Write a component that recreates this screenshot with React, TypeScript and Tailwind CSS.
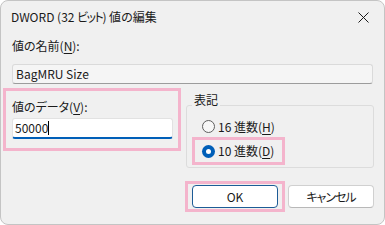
import React from "react";

const font = "font-['Noto_Sans_CJK_JP','Noto_Sans',sans-serif] [font-feature-settings:'palt']";

function U({ children }: { children: React.ReactNode }) {
  return <span className="underline underline-offset-[2px] decoration-[1px]">{children}</span>;
}

function Radio({ checked }: { checked?: boolean }) {
  return checked ? (
    <span className="w-[13px] h-[13px] rounded-full bg-[#005fb8] flex items-center justify-center shrink-0">
      <span className="w-[5px] h-[5px] rounded-full bg-white" />
    </span>
  ) : (
    <span className="w-[13px] h-[13px] rounded-full border border-[#5f5f5f] bg-[#f7f7f7] shrink-0" />
  );
}

export default function App() {
  return (
    <div className={`w-[385px] h-[225px] bg-white ${font} text-[12px] text-[#1a1a1a]`}>
      <div className="w-full h-full rounded-[8px] border border-[#c4c4c4] bg-[#f0f0f0] flex flex-col overflow-hidden">
        {/* title bar */}
        <div className="h-[31px] flex items-center justify-between pl-[10px] pr-[15px]">
          <span className="leading-[16px] pt-[1px]">
            DWORD (32 <span className="tracking-[-1.5px]">ビット</span>) 値の編集
          </span>
          <svg width="11" height="11" viewBox="0 0 11 11" className="mt-[1px]">
            <path d="M0.5 0.5 L10.5 10.5 M10.5 0.5 L0.5 10.5" stroke="#1a1a1a" strokeWidth="1" />
          </svg>
        </div>
        {/* body */}
        <div className="flex flex-col pl-[11px] pr-[10px]">
          <div className="mt-[6px] leading-[16px]">
            値の名前(<U>N</U>):
          </div>
          <div className="mt-[10px] w-[361px] h-[20px] bg-[#f5f5f5] border border-[#dadada] border-b-[#9c9c9c] rounded-[3px] flex items-center pl-[3px] leading-[16px]">
            BagMRU Size
          </div>
        </div>
        <div className="flex mt-[4px] pl-[2px]">
          {/* data pink box */}
          <div className="w-[178px] h-[63px] border-[3px] border-[#f4b4cc] pt-[8px] pl-[6px] flex flex-col">
            <div className="leading-[16px]">
              値のデータ(<U>V</U>):
            </div>
            <div className="mt-[3px] w-[161px] h-[21px] bg-white border border-[#e2e2e2] border-b-2 border-b-[#005fb8] rounded-[3px] flex items-center pl-[2px] leading-[16px]">
              <span>50000</span>
              <span className="w-[1px] h-[14px] bg-black" />
            </div>
          </div>
          {/* group box */}
          <div className="ml-[5px] mt-[17px] w-[188px] h-[63px] border border-[#dcdcdc] rounded-[3px] flex flex-col">
            <span className="-mt-[14px] ml-[5px] px-[2px] self-start bg-[#f0f0f0] leading-[16px]">表記</span>
            <div className="mt-[8px] h-[21px] flex items-center pl-[15px] gap-[3px]">
              <Radio />
              <span className="leading-[16px]">
                16 進数(<U>H</U>)
              </span>
            </div>
            <div className="ml-[5px] w-[93px] h-[28px] border-[3px] border-[#f4b4cc] flex items-center pl-[7px] gap-[3px]">
              <Radio checked />
              <span className="leading-[16px]">
                10 進数(<U>D</U>)
              </span>
            </div>
          </div>
        </div>
        {/* buttons */}
        <div className="flex justify-end items-center mt-[13px] pr-[10px]">
          <div className="border-[3px] border-[#f4b4cc] px-[4px] py-[1px]">
            <div className="w-[86px] h-[23px] bg-white border border-[#1d5c96] rounded-[4px] flex items-center justify-center leading-[16px]">
              OK
            </div>
          </div>
          <div className="ml-[3px] w-[86px] h-[23px] bg-white border border-[#d0d0d0] border-b-[#b8b8b8] rounded-[4px] flex items-center justify-center leading-[16px] tracking-[-1px]">
            キャンセル
          </div>
        </div>
      </div>
    </div>
  );
}
